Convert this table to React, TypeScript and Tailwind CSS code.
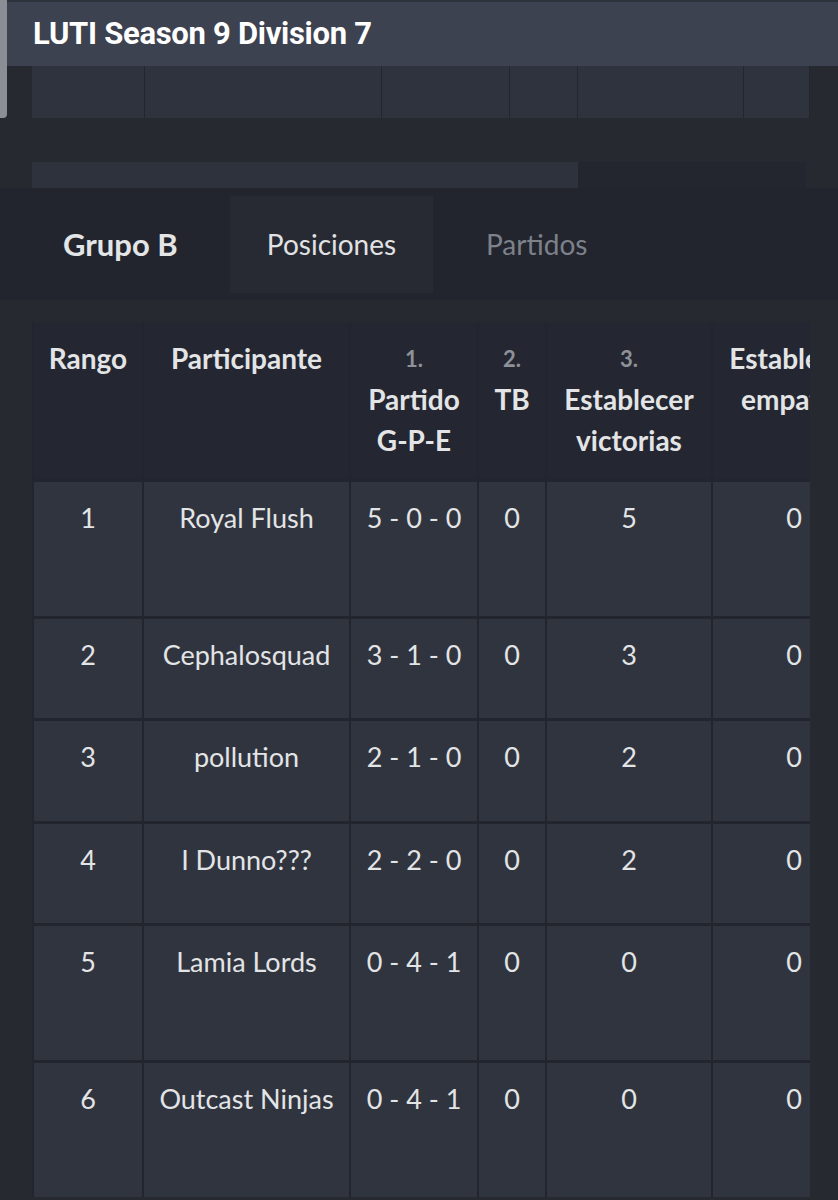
import React from 'react';

type Row = {
  rank: number;
  name: string;
  record: string;
  tb: number;
  sets: number;
  ties: number;
  h: string;
};

const rows: Row[] = [
  { rank: 1, name: 'Royal Flush', record: '5 - 0 - 0', tb: 0, sets: 5, ties: 0, h: 'h-[137px]' },
  { rank: 2, name: 'Cephalosquad', record: '3 - 1 - 0', tb: 0, sets: 3, ties: 0, h: 'h-[102px]' },
  { rank: 3, name: 'pollution', record: '2 - 1 - 0', tb: 0, sets: 2, ties: 0, h: 'h-[103px]' },
  { rank: 4, name: 'I Dunno???', record: '2 - 2 - 0', tb: 0, sets: 2, ties: 0, h: 'h-[102px]' },
  { rank: 5, name: 'Lamia Lords', record: '0 - 4 - 1', tb: 0, sets: 0, ties: 0, h: 'h-[137px]' },
  { rank: 6, name: 'Outcast Ninjas', record: '0 - 4 - 1', tb: 0, sets: 0, ties: 0, h: 'h-[136px]' },
];

const sans = "font-['Lato','Noto_Sans',sans-serif]";

function HeadCell({ num, children, w }: { num?: string; children: React.ReactNode; w: string }) {
  return (
    <th className={`${w} border-x-2 border-[#22252d] bg-[#242731] px-2 pt-[16px] align-top font-bold`}>
      {num && <div className="text-[22px] leading-[41px] text-[#8e9198]">{num}</div>}
      <div className="text-[28px] leading-[41px] text-[#e3e4e6]">{children}</div>
    </th>
  );
}

export default function App() {
  return (
    <div className={`relative min-h-[1200px] w-[838px] overflow-hidden bg-[#262930] ${sans}`}>
      {/* fixed title bar */}
      <div className="absolute left-0 right-0 top-0 z-10 flex h-[66px] items-center border-t-2 border-[#2e323b] bg-[#3d4250] pl-[33px]">
        <h1 className="font-['Roboto',sans-serif] text-[31px] font-bold tracking-[-0.3px] text-white">LUTI Season 9 Division 7</h1>
      </div>
      {/* scroll handle sliver */}
      <div className="absolute left-0 top-0 z-20 h-[118px] w-[7px] rounded-br-[4px] bg-[#8b8e94]" />

      {/* previous table, scrolled under the header */}
      <div className="flex h-[118px] px-[32px]">
        <div className="flex w-[778px] items-end">
          {[113, 237, 128, 68, 166, 66].map((w, i) => (
            <div key={i} style={{ width: w }} className="h-[120px] border-r border-[#23262e] bg-[#2f333e]" />
          ))}
        </div>
      </div>

      {/* progress bar */}
      <div className="mt-[44px] flex h-[26px] px-[32px]">
        <div className="w-[549px] bg-[#2e323d]" />
        <div className="w-[229px] bg-[#23262e]" />
      </div>

      {/* group tabs */}
      <div className="flex h-[112px] items-center bg-[#22252d]">
        <div className="w-[230px] pl-[63px] text-[31px] font-bold text-[#e4e5e7]">Grupo B</div>
        <div className="flex h-[97px] w-[203px] items-center justify-center bg-[#272a33] text-[28px] text-[#e1e2e4]">
          Posiciones
        </div>
        <div className="pl-[53px] text-[28px] text-[#7d818a]">Partidos</div>
      </div>

      {/* standings */}
      <div className="ml-[32px] mt-[22px] w-[778px] overflow-hidden">
        <table className="w-[843px] table-fixed border-collapse text-center">
          <thead>
            <tr className="h-[158px]">
              <HeadCell w="w-[110px]">Rango</HeadCell>
              <HeadCell w="w-[207px]">Participante</HeadCell>
              <HeadCell w="w-[128px]" num="1.">
                Partido
                <br />
                G-P-E
              </HeadCell>
              <HeadCell w="w-[68px]" num="2.">TB</HeadCell>
              <HeadCell w="w-[166px]" num="3.">
                Establecer
                <br />
                victorias
              </HeadCell>
              <HeadCell w="w-[164px]">
                Establecer
                <br />
                empates
              </HeadCell>
            </tr>
          </thead>
          <tbody>
            {rows.map((r) => (
              <tr key={r.rank} className={`${r.h} border-t-[3px] border-[#22252d] bg-[#30343f] align-top text-[27px] text-[#e3e4e6]`}>
                <td className="border-x-2 border-[#22252d] pt-[16px]">{r.rank}</td>
                <td className="whitespace-nowrap border-x-2 border-[#22252d] pt-[16px]">{r.name}</td>
                <td className="whitespace-nowrap border-x-2 border-[#22252d] pt-[16px]">{r.record}</td>
                <td className="border-x-2 border-[#22252d] pt-[16px]">{r.tb}</td>
                <td className="border-x-2 border-[#22252d] pt-[16px]">{r.sets}</td>
                <td className="border-x-2 border-[#22252d] pt-[16px]">{r.ties}</td>
              </tr>
            ))}
          </tbody>
        </table>
      </div>
    </div>
  );
}
